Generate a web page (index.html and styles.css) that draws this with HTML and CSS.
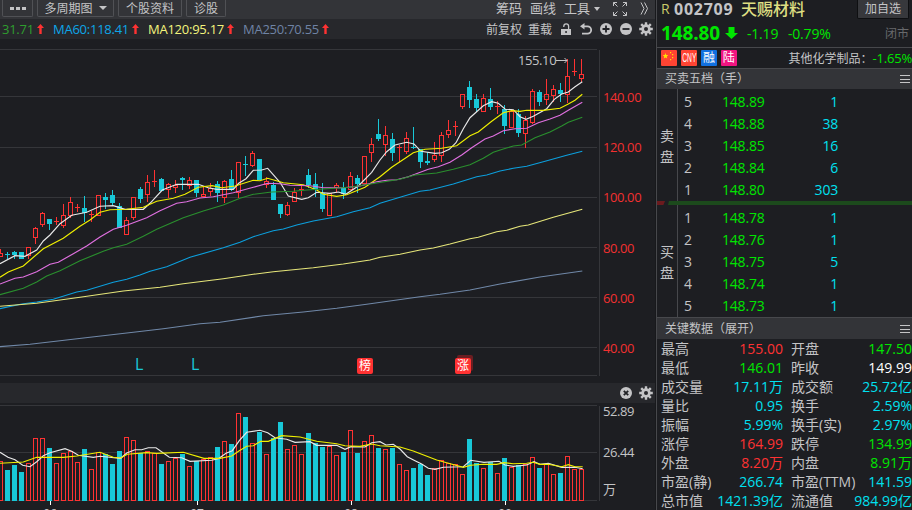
FILE: index.html
```
<!DOCTYPE html>
<html lang="zh-CN">
<head>
  <meta charset="utf-8">
  <title>天赐材料 002709</title>
  <link rel="stylesheet" href="styles.css">
</head>
<body>
  <div class="app">
    <div class="main">
      <div class="toolbar">
        <div class="tabs">
          <button class="tab tab-more"><i></i><i></i><i></i></button>
          <button class="tab tab-period">多周期图<span class="caret"></span></button>
          <button class="tab tab-info">个股资料</button>
          <button class="tab tab-diag">诊股</button>
        </div>
        <div class="tools">
          <span>筹码</span>
          <span>画线</span>
          <span>工具</span>
          <span class="caret small"></span>
          <svg class="expand" width="14" height="14" viewBox="0 0 14 14"><path d="M0.500 4V.5H4M.5.500 4.500 4.500M10 .5h3.500V4M13.500.5l-4 4M.5 10v3.500H4M.5 13.500l4-4M10 13.500h3.500V10M13.500 13.500l-4-4"/></svg>
          <svg class="more" width="9" height="13" viewBox="0 0 9 13"><path d="M1 .5l3 6-3 6M4.500.5l3 6-3 6"/></svg>
        </div>
      </div>

      <div class="ma-bar">
        <div class="ma-list">
          <span class="ma ma30">31.71<svg class="up" width="7" height="10" viewBox="0 0 7 10"><path d="M3.500 0L7 4H4.700v6H2.300V4H0z"/></svg></span>
          <span class="ma ma60">MA60:118.41<svg class="up" width="7" height="10" viewBox="0 0 7 10"><path d="M3.500 0L7 4H4.700v6H2.300V4H0z"/></svg></span>
          <span class="ma ma120">MA120:95.17<svg class="up" width="7" height="10" viewBox="0 0 7 10"><path d="M3.500 0L7 4H4.700v6H2.300V4H0z"/></svg></span>
          <span class="ma ma250">MA250:70.55<svg class="up" width="7" height="10" viewBox="0 0 7 10"><path d="M3.500 0L7 4H4.700v6H2.300V4H0z"/></svg></span>
        </div>
        <div class="ma-tools">
          <span class="restore">前复权</span>
          <span class="reload">重载</span>
          <svg width="12" height="12" viewBox="0 0 12 12"><path d="M1 6h10v6H1z" fill="#c4c4c6"/><path d="M3.800 4V3.200a2.400 2.400 0 0 1 4.800 0V6" fill="none" stroke="#c4c4c6" stroke-width="1.300"/><path d="M5.300 8h1.500v2H5.300z" fill="#27282c"/></svg>
          <svg width="12" height="12" viewBox="0 0 12 12"><path d="M2 3.300h5.500a3.600 3.600 0 0 1 0 7.300H2" fill="none" stroke="#c4c4c6" stroke-width="1.800"/><path d="M0 3.300L4.500 0v6.600z" fill="#c4c4c6"/></svg>
          <svg width="12" height="12" viewBox="0 0 12 12"><circle cx="6" cy="6" r="6" fill="#c4c4c6"/><path d="M2.500 6h7M6 2.500v7" stroke="#202125" stroke-width="1.800"/></svg>
          <svg width="12" height="12" viewBox="0 0 12 12"><circle cx="6" cy="6" r="6" fill="#c4c4c6"/><path d="M2.500 6h7" stroke="#202125" stroke-width="1.800"/></svg>
          <svg class="gear" width="14" height="14" viewBox="-7 -7 14 14"><path d="M0-6.800V6.800M-6.800 0H6.800M-4.800-4.800L4.800 4.800M-4.800 4.800L4.800-4.800" stroke="#c4c4c6" stroke-width="2.400"/><circle r="4.700" fill="#c4c4c6"/><circle r="2" fill="#27282c"/></svg>
        </div>
      </div>

      <div class="chart">
        <svg id="kline" width="600" height="344" viewBox="0 39 600 344"></svg>
        <div class="axis price-axis">
          <span>140.00</span>
          <span>120.00</span>
          <span>100.00</span>
          <span>80.00</span>
          <span>60.00</span>
          <span>40.00</span>
        </div>
        <div class="peak">155.10<svg width="12" height="7" viewBox="0 0 12 7"><path d="M0 3.500h11M8.500 1l2.500 2.500L8.500 6"/></svg></div>
        <span class="flag-l first">L</span>
        <span class="flag-l second">L</span>
        <span class="mark bang">榜</span>
        <span class="mark zhang">涨</span>
      </div>

      <div class="vol-bar">
        <svg width="12" height="12" viewBox="0 0 12 12"><circle cx="6" cy="6" r="6" fill="#c4c4c6"/><path d="M3.800 3.800l4.400 4.400M8.200 3.800L3.800 8.200" stroke="#202125" stroke-width="1.800"/></svg>
        <svg class="gear" width="14" height="14" viewBox="-7 -7 14 14"><path d="M0-6.800V6.800M-6.800 0H6.800M-4.800-4.800L4.800 4.800M-4.800 4.800L4.800-4.800" stroke="#c4c4c6" stroke-width="2.400"/><circle r="4.700" fill="#c4c4c6"/><circle r="2" fill="#27282c"/></svg>
      </div>

      <div class="volume">
        <svg id="vol" width="600" height="107" viewBox="0 403 600 107"></svg>
        <div class="axis vol-axis">
          <span>52.89</span>
          <span>26.44</span>
          <span class="unit">万</span>
        </div>
        <span class="month m6">06</span>
        <span class="month m7">07</span>
        <span class="month m8">08</span>
        <span class="month m9">09</span>
      </div>
    </div>

    <div class="side">
      <div class="quote">
        <div class="name-row">
          <span class="margin">R</span>
          <span class="code">002709</span>
          <span class="name">天赐材料</span>
          <button class="add">加自选</button>
        </div>
        <div class="price-row">
          <span class="price">148.80</span>
          <svg width="13" height="12" viewBox="0 0 13 12"><path d="M3.500 0h6v6H13l-6.500 6L0 6h3.500z" fill="#00e600"/></svg>
          <span class="diff">-1.19</span>
          <span class="pct">-0.79%</span>
          <span class="closed">闭市</span>
        </div>
      </div>
      <div class="tags">
        <span class="tag cn"><svg width="16" height="16" viewBox="0 0 16 16"><path d="M4.500 3l.8 1.900 2 .1-1.500 1.400.4 2.100-1.700-1.100-1.700 1.100.4-2.100L1.700 5l2-.1z"/><path d="M9 2h1.200v1.200H9zM11 4h1.200v1.200H11zM11 7h1.200v1.200H11zM9 9h1.200v1.200H9z"/></svg></span>
        <span class="tag cny"><b>CNY</b></span>
        <span class="tag rong">融</span>
        <span class="tag lu">陆</span>
        <span class="sector">其他化学制品：</span>
        <span class="sector-pct">-1.65%</span>
      </div>

      <div class="head">买卖五档（手）<i class="menu"></i></div>
      <div class="book sell">
        <div class="book-side"><span>卖</span><span>盘</span></div>
        <div class="levels">
          <div class="level"><span>5</span><span>148.89</span><span>1</span></div>
          <div class="level"><span>4</span><span>148.88</span><span>38</span></div>
          <div class="level"><span>3</span><span>148.85</span><span>16</span></div>
          <div class="level"><span>2</span><span>148.84</span><span>6</span></div>
          <div class="level"><span>1</span><span>148.80</span><span>303</span></div>
        </div>
      </div>
      <div class="ratio"><i class="buy-part"></i><i class="sell-part"></i></div>
      <div class="book buy">
        <div class="book-side"><span>买</span><span>盘</span></div>
        <div class="levels">
          <div class="level"><span>1</span><span>148.78</span><span>1</span></div>
          <div class="level"><span>2</span><span>148.76</span><span>1</span></div>
          <div class="level"><span>3</span><span>148.75</span><span>5</span></div>
          <div class="level"><span>4</span><span>148.74</span><span>1</span></div>
          <div class="level"><span>5</span><span>148.73</span><span>1</span></div>
        </div>
      </div>

      <div class="head key-head">关键数据（展开）<i class="menu"></i></div>
      <div class="stats">
        <span>最高</span><b class="red">155.00</b><span>开盘</span><b class="green">147.50</b>
        <span>最低</span><b class="green">146.01</b><span>昨收</span><b class="white">149.99</b>
        <span>成交量</span><b>17.11万</b><span>成交额</span><b>25.72亿</b>
        <span>量比</span><b>0.95</b><span>换手</span><b>2.59%</b>
        <span>振幅</span><b>5.99%</b><span>换手(实)</span><b>2.97%</b>
        <span>涨停</span><b class="red">164.99</b><span>跌停</span><b class="green">134.99</b>
        <span>外盘</span><b class="red">8.20万</b><span>内盘</span><b class="green">8.91万</b>
        <span>市盈(静)</span><b>266.74</b><span>市盈(TTM)</span><b>141.59</b>
        <span>总市值</span><b>1421.39亿</b><span>流通值</span><b>984.99亿</b>
      </div>
    </div>
  </div>
  <script src="chart.js"></script>
</body>
</html>
```
FILE: styles.css
```
* {
  box-sizing: border-box;
}
body {
  margin: 0;
  background: #1d1e22;
  color: #c4c4c6;
  font-family: "Open Sans", "Noto Sans CJK SC", sans-serif;
  font-size: 13px;
  overflow: hidden;
}
svg {
  display: block;
  flex: none;
}
button {
  font-family: inherit;
  color: inherit;
  padding: 0;
}
.app {
  display: flex;
  width: 912px;
  height: 510px;
  overflow: hidden;
  white-space: nowrap;
}
.main {
  width: 656px;
  flex: none;
  display: flex;
  flex-direction: column;
  border-right: 1px solid #18191c;
}

/* top bars */
.toolbar {
  height: 19px;
  background: #333438;
  display: flex;
  justify-content: space-between;
}
.tabs {
  display: flex;
  gap: 4px;
  padding-left: 2px;
}
.tab {
  height: 17px;
  border: 1px solid #505155;
  border-top: 0;
  border-radius: 0 0 2px 2px;
  background: #333438;
  font-size: 12px;
  line-height: 15px;
  display: flex;
  align-items: center;
  justify-content: center;
}
.tab-more {
  width: 31px;
  gap: 2px;
}
.tab-more i {
  width: 4px;
  height: 3px;
  background: #c4c4c6;
}
.tab-period {
  width: 77px;
}
.tab-info {
  width: 64px;
}
.tab-diag {
  width: 40px;
}
.caret {
  border: 4px solid transparent;
  border-top-color: #c4c4c6;
  border-bottom: 0;
  margin-left: 6px;
}
.tools {
  display: flex;
  align-items: center;
  line-height: 17px;
  padding-right: 6px;
  height: 17px;
}
.tools span {
  margin-right: 8px;
}
.tools .caret.small {
  border-width: 3px;
  border-top-width: 4px;
  border-bottom: 0;
  margin: 0 13px 0 -4px;
}
.expand, .more {
  fill: none;
  stroke: #c4c4c6;
}
.more {
  margin-left: 13px;
}
.ma-bar {
  height: 20px;
  background: #27282c;
  display: flex;
  justify-content: space-between;
  line-height: 19px;
}
.ma-list {
  display: flex;
  padding-left: 2px;
  letter-spacing: -0.25px;
}
.ma {
  display: flex;
  align-items: center;
}
.up {
  fill: #ff3232;
  margin-left: 3px;
}
.ma30 {
  width: 51px;
  color: #2f9e2f;
}
.ma60 {
  width: 95px;
  color: #0da6e8;
}
.ma120 {
  width: 95px;
  color: #f4f47c;
}
.ma250 {
  color: #6f83a5;
}
.ma-tools {
  display: flex;
  align-items: center;
  gap: 8px;
  padding-right: 2px;
  font-size: 12px;
}
.ma-tools .restore {
  margin-right: -2px;
}
.gear {
  margin-left: -1px;
}

/* price chart */
.chart {
  position: relative;
  display: flex;
  height: 344px;
}
.axis {
  display: flex;
  flex-direction: column;
  padding-left: 3px;
  letter-spacing: -0.4px;
}
.price-axis {
  padding-top: 33px;
  color: #f23030;
  font-weight: 500;
}
.price-axis span {
  height: 50.200px;
  line-height: 50px;
}
.peak {
  position: absolute;
  left: 518px;
  top: 12px;
  line-height: 18px;
  display: flex;
  align-items: center;
  letter-spacing: -0.4px;
}
.peak svg {
  fill: none;
  stroke: #c4c4c6;
}
.flag-l {
  position: absolute;
  top: 315px;
  font: 16px/20px "Open Sans", sans-serif;
  color: #18c8d8;
}
.first {
  left: 135px;
}
.second {
  left: 191px;
}
.mark {
  position: absolute;
  width: 16px;
  height: 16px;
  border-radius: 2px;
  background: #ff3232;
  color: #fff;
  font-size: 12px;
  line-height: 15px;
  text-align: center;
}
.bang {
  left: 357px;
  top: 319px;
}
.zhang {
  left: 455px;
  top: 319px;
  box-shadow: 2px -3px 0 #6b1e22;
}
.grid {
  stroke: #35363a;
  shape-rendering: crispEdges;
}
.line {
  fill: none;
  stroke-width: 1.150;
}

/* volume */
.vol-bar {
  height: 20px;
  background: #27282c;
  display: flex;
  align-items: center;
  justify-content: flex-end;
  gap: 8px;
  padding-right: 2px;
}
.volume {
  position: relative;
  display: flex;
  height: 107px;
}
.vol-axis span {
  height: 41px;
  line-height: 17px;
}
.vol-axis .unit {
  height: 18px;
  margin-top: -4px;
}
.month {
  position: absolute;
  top: 103px;
  width: 20px;
  margin-left: -10px;
  text-align: center;
  font-size: 12px;
  line-height: 16px;
}
.m6 { left: 50px; }
.m7 { left: 197px; }
.m8 { left: 351px; }
.m9 { left: 505px; }

/* right panel */
.side {
  flex: none;
  width: 256px;
  border-left: 1px solid #47484c;
}
.quote {
  height: 48px;
  border-bottom: 1px solid #47484c;
}
.name-row {
  display: flex;
  height: 19px;
  line-height: 18px;
  padding-left: 4px;
}
.margin {
  width: 13px;
  color: #c9c96a;
  font-size: 14px;
}
.code {
  width: 67px;
  font-size: 16px;
  font-weight: 700;
  letter-spacing: 0.750px;
}
.name {
  width: 116px;
  color: #dede82;
  font-size: 16px;
  font-weight: 500;
}
.add {
  width: 52px;
  height: 19px;
  border: 1px solid #0e0f11;
  border-top: 0;
  border-radius: 0 0 2px 2px;
  background: #37383c;
  font-size: 12px;
  line-height: 16px;
}
.price-row {
  display: flex;
  align-items: center;
  height: 28px;
  padding-left: 4px;
  color: #00e600;
  font-size: 14px;
  letter-spacing: -0.200px;
}
.price {
  width: 64px;
  font-size: 19px;
  font-weight: 700;
  letter-spacing: -0.100px;
}
.diff {
  margin-left: 9px;
  width: 41px;
}
.pct {
  width: 97px;
}
.closed {
  color: #68696c;
  font-size: 12px;
  letter-spacing: 0;
}
.tags {
  display: flex;
  align-items: center;
  height: 20px;
  padding-left: 4px;
  font-size: 12px;
}
.tag {
  width: 16px;
  height: 16px;
  margin-right: 4px;
  line-height: 15px;
  text-align: center;
  color: #fff;
  border-radius: 1px;
}
.cn {
  background: #ff4433;
  fill: #ffe000;
}
.cny {
  background: #ff4433;
  font: 12px/16px "Liberation Sans", sans-serif;
}
.cny b {
  display: block;
  width: 26px;
  font-weight: 400;
  transform: scaleX(0.560);
  transform-origin: 0 0;
  margin-left: 1px;
}
.rong {
  background: #1070e0;
}
.lu {
  background: #f01480;
}
.sector {
  margin-left: 48px;
  width: 84px;
}
.sector-pct {
  color: #00e600;
  font-size: 13px;
  letter-spacing: -0.200px;
}
.head {
  display: flex;
  justify-content: space-between;
  height: 21px;
  border-top: 1px solid #47484c;
  background: #333438;
  padding: 0 2px 0 8px;
  font-size: 12px;
  line-height: 19px;
}
.menu {
  width: 10px;
  height: 8px;
  margin-top: 6px;
  border: solid #c4c4c6;
  border-width: 1px 0;
  background: linear-gradient(#c4c4c6, #c4c4c6) 0 50% / 100% 1px no-repeat;
}
.key-head {
  height: 22px;
  line-height: 21px;
}
.key-head .menu {
  margin-top: 7px;
}
.book {
  display: flex;
}
.book-side {
  width: 21px;
  border-right: 1px solid #47484c;
  display: flex;
  flex-direction: column;
  align-items: center;
  justify-content: center;
  line-height: 21px;
  font-size: 14px;
  padding-top: 1px;
}
.levels {
  flex: 1;
  padding-top: 2px;
}
.level {
  display: grid;
  grid-template-columns: 38px 63px 59px;
  height: 22px;
  line-height: 22px;
  padding-left: 6px;
  font-size: 14px;
  letter-spacing: -0.200px;
}
.level span:nth-child(2) {
  color: #00e600;
}
.level span:nth-child(3) {
  color: #00e0f0;
  text-align: right;
  padding-right: 6px;
}
.ratio {
  display: flex;
  height: 4px;
  gap: 3px;
}
.buy-part {
  width: 8px;
  background: #6b1a1e;
  clip-path: polygon(0 0, 100% 0, 80% 100%, 0 100%);
}
.sell-part {
  flex: 1;
  background: #1c4a1c;
  clip-path: polygon(1px 0, 100% 0, 100% 100%, 0 100%);
}
.stats {
  display: grid;
  grid-template-columns: 50px 72px 69px 60px;
  grid-auto-rows: 19px;
  line-height: 19px;
  padding-left: 4px;
  font-size: 14px;
}
.stats b {
  font-weight: 400;
  color: #00e0f0;
  justify-self: end;
}
.stats span:nth-child(4n + 3) {
  padding-left: 8px;
}
.stats .red {
  color: #ff3232;
}
.stats .green {
  color: #00e600;
}
.stats .white {
  color: #fff;
}
```
FILE: chart.js
```
// r = up (hollow), c = down (filled); then body top, body bottom, high, low
var candles = [
  ['r',253,257,249,257],['c',254,255,252,259],['c',252,255,251,259],['c',252,259,252,259],['r',247,256,247,259],['r',228,238,227,244],
  ['r',213,225,212,227],['c',219,224,219,230],['r',221,222,217,225],['r',215,226,204,228],['r',202,216,197,218],['r',207,208,204,212],
  ['c',208,213,196,222],['r',214,215,211,222],['r',195,216,195,216],['c',197,200,193,209],['c',195,203,190,206],['c',206,228,203,228],
  ['r',220,235,217,235],['r',197,218,197,220],['c',189,199,187,203],['r',182,195,175,202],['r',181,182,170,187],['c',179,191,178,191],
  ['r',184,190,183,198],['r',185,188,180,193],['c',178,180,177,190],['r',180,186,177,189],['c',180,193,180,197],['r',194,197,187,197],
  ['r',188,192,183,196],['c',184,193,181,202],['r',181,198,180,203],['c',179,189,170,191],['r',162,193,162,198],['c',164,165,156,176],
  ['r',153,166,151,167],['c',159,180,159,180],['r',181,185,177,188],['c',185,200,182,200],['c',204,214,204,218],['r',205,215,202,216],
  ['r',192,202,188,202],['r',189,190,185,196],['c',175,185,169,188],['c',184,190,173,197],['c',193,209,183,212],['r',193,216,193,216],
  ['r',185,188,183,193],['c',188,194,182,199],['r',176,190,172,190],['c',178,184,175,193],['r',156,184,156,184],['r',144,153,138,162],
  ['c',134,139,119,141],['r',135,145,126,156],['c',139,153,133,161],['r',147,148,145,162],['r',138,152,132,154],['c',147,148,127,149],
  ['c',149,162,149,168],['c',161,163,152,165],['r',155,160,142,162],['r',135,156,132,162],['r',130,135,120,138],['r',126,127,121,136],
  ['r',94,107,94,109],['c',87,100,81,108],['c',99,108,94,112],['r',98,112,94,112],['c',99,107,88,110],['r',106,107,101,114],
  ['c',109,126,105,134],['r',111,128,109,128],['c',114,133,109,137],['r',120,134,116,148],['r',91,123,89,124],['c',92,102,90,106],
  ['r',94,100,79,105],['r',89,96,85,102],['c',90,94,83,102],['r',76,95,59,103],['r',71,72,59,76],['r',74,79,59,82]
];

// top of every volume bar
var volumes = [
  461,470,465,472,463,438,438,448,463,453,451,462,449,469,452,454,464,451,437,440,453,451,453,464,461,458,454,466,461,459,457,447,
  441,444,413,417,443,432,454,438,422,449,445,454,433,443,447,446,455,452,430,453,441,435,448,449,448,464,470,468,464,475,468,460,
  463,464,474,439,463,468,462,473,458,467,465,464,457,468,464,474,473,456,469,469
];

var lines = [
  ['#e8e8e8', '0,263.700 15,255.700 25,256.300 36.700,250 43.300,241 50,235 60,223.700 71.700,215.300 86.700,212.300 100,206.300 113.300,205.700 125,209.300 143.300,209.300 150,203.300 162.300,190 176.700,184.300 198.300,184.300 208.300,187.700 216.700,189.300 233.300,189.300 238.700,183.300 246,178.700 253.300,170.300 261.700,170 267.700,168.300 280,182.300 288.300,196 301.700,199.300 308.300,197.700 316.700,192.300 330,193.300 338.300,192 345.700,194.300 358.300,186 371.700,172.300 380,160 386.700,151.700 395,145 406.700,142.300 414,144 421,151.300 435,153.300 441.700,152.700 449.300,149.300 456,142.700 463.300,128.700 470,117.700 483.300,105.700 491.700,101.700 498.300,103.300 505.300,109.300 513.300,109.700 520,116.700 526,119.300 533.300,116.300 546.700,108.700 554.300,99.300 561.700,94 568.300,92 575,86.700 582.300,81.700'],
  ['#f0f000', '0,277.300 8.300,272 23.300,266 43.300,248.700 63.300,238.300 80,226.300 90,220 100,212.300 110,209.700 126.700,209.300 143.300,207.300 156.700,201.300 173.300,198.300 185,194.300 198.300,187.300 212,185.700 221.700,187.700 235,186 253.300,180.300 260,180.700 267.700,178.300 283.300,182.700 303.300,184.700 316.700,190 323.300,194.300 336.700,196.300 346.700,194.700 365,187.300 380,176.700 391.700,167.300 406.700,157.300 413.300,152.700 425,149.300 441.700,148.300 456.700,145.700 470,135.700 478.300,132 491.700,121.300 503.300,112.700 511.700,110.700 520,111.300 526.700,110.300 543.300,110.300 560,108.300 568.300,104 575,100.300 582.300,94.300'],
  ['#e070e0', '0,284 15,278.300 23.300,277 36.700,271.700 50,264.300 58.300,262.300 73.300,253.700 86.700,246 100,237 113.300,229.300 126.700,225.300 146.700,217.700 160,210.700 176.700,203.300 186.700,201.700 200,198 213.300,196.700 233.300,192.700 253.300,187.300 267.700,183.300 280,183.700 290,185.300 310,185.700 323.300,187.700 343.300,187.700 360,186 376.700,181.700 386.700,180.300 396.700,179.700 408.300,176.700 428.300,169.300 438.300,166.700 450,162.300 461.700,155 471.700,147.700 485,139 493.300,136 503.300,130.700 515,128.700 526.700,128.300 538.300,122.700 550,119 560,115.300 568.300,110.300 582.300,102.300'],
  ['#2a8f2e', '0,294.700 23.300,288.300 36.700,282 46.700,276 60,270.700 80,260.700 103.300,251.300 113.300,247.700 126.700,244.300 143.300,236.300 156.700,229.300 183.300,217.700 203.300,211 223.300,205 240,198.300 253.300,194.300 271.700,192 293.300,191.300 306.700,190 326.700,188.700 350,187.300 376.700,183 400,179.300 415,175 436.700,173 453.300,169.300 470,164.700 483.300,158.300 493.300,152.300 503.300,149 513.300,146 521.700,145 535,137.700 550,132 561.700,126 568.300,122.300 582.300,117.300'],
  ['#0c9fdd', '0,308.700 21.700,304 36.700,302 53.300,299.300 76.700,292 86.700,290.300 113.300,282.300 126.700,279.300 140,275 150,271.300 166.700,266.700 190,257.300 223.300,247.700 240,242.300 253.300,236.700 273.300,230.700 283.300,229 296.700,225 313.300,221 336.700,216.700 353.300,211.700 370,207.700 380,203.300 400,197.300 420,191.300 430,190 453.300,184 476.700,176.700 486.700,175 500,171 513.300,168.300 526.700,166.300 543.300,161.700 566.700,155.300 582.300,151.300'],
  ['#e6e67a', '0,306.300 36.700,303.300 80,297.300 123.300,291 160,287.300 183.300,283.700 223.300,278.700 253.300,274.300 273.300,271.700 313.300,267.700 343.300,264 370,260 380,257.300 400,254.300 420,250 433.300,248 450,244 470,238.700 478.300,237.300 496.700,231.700 506.700,230.300 520,226.300 528.300,225 553.300,217.300 582.300,209.300'],
  ['#7088a8', '0,346.700 30,344.300 90,337.300 133.300,332.300 163.300,328.700 200,323.700 220,322.300 263.300,315.700 303.300,312 336.700,308.300 366.700,304.300 420,296.700 440,294.300 470,290 500,284 540,277 582.300,271']
];

var volLines = [
  ['#e8e8e8', '0,452.300 8,457.300 15,459.700 22.700,465.300 30,466.700 36.700,461.700 43.300,455.700 50,452.700 65,448.700 71.700,451.300 78.300,455.300 93.300,457.300 100,456.300 120.700,458.300 126.700,453 135,449.700 141.700,449.700 148.300,447.700 156,447.700 169.300,457.300 181.700,457.700 190,461.300 211.700,460.300 218.300,458.700 226,453.300 232.300,450.700 239.300,440.700 246.700,432.300 260,430.300 267.700,432.700 275,437.700 286.700,439.300 295,442.300 310,441.700 316.700,445.300 336.700,445.300 345,449.300 351,446.700 365,447 371.700,442.700 380,441.700 386,445 393.300,444.300 400,449 407.300,456.700 415,460.700 421.700,464 428.300,468.300 435,469.300 443.300,467.300 463.300,466.700 470.700,460.300 484,462.300 499,461.300 505,465 513.300,466.300 526.700,465 534,461.700 540,464.300 548.300,463.300 561.700,467.300 575,467.300 582.700,468.700'],
  ['#f0f000', '0,463.300 23.300,462 36.700,457.300 63.300,457.300 76.700,456 100,452.300 113.300,457.300 120.700,458 127.300,454.300 146.700,452.700 156.700,453.300 183.300,452.300 204,458.300 220,458.300 231.700,456 239.300,450.700 246.700,446.300 253.300,445.700 260.700,441.300 268.300,441.300 281.700,435.700 300,437 316.700,441.300 336.700,443.700 345,445.700 360,446.300 371.700,444 380,445.700 400,447 413.300,451 421.700,454.300 436.700,460 446.700,462.700 463.300,467.300 470.700,465.300 483.300,464.300 496.700,464.300 504,462.700 513.300,463.700 526.700,463.300 533.300,462.300 540,464.300 548.300,464.300 561.700,466.700 568.300,464.700 575,466.700 582.700,466.700']
];

var RED = '#ff3232', CYAN = '#18c8d8';

function hline(y) {
  return '<path class="grid" d="M0 ' + (y + 0.5) + 'H597"/>';
}

function rect(x, y, w, h, color) {
  return '<rect x="' + x + '" y="' + y + '" width="' + w + '" height="' + h + '" fill="' + color + '"/>';
}

function box(x, y, w, h) {
  return '<rect x="' + (x + 0.5) + '" y="' + (y + 0.5) + '" width="' + (w - 1) + '" height="' + (h - 1) + '" fill="none" stroke="' + RED + '"/>';
}

function polylines(list) {
  return list.map(function(l) {
    return '<polyline class="line" stroke="' + l[0] + '" points="' + l[1] + '"/>';
  }).join('');
}

function drawKline() {
  var out = [49, 96, 147, 197, 247, 297, 347, 375].map(hline).join('');
  out += '<path class="grid" d="M599.5 50V376"/>';
  candles.forEach(function(c, i) {
    var x = i * 7, color = c[0] === 'r' ? RED : CYAN;
    if (c[0] === 'c' || c[2] - c[1] < 2) {
      out += rect(x, c[3], 1, c[4] - c[3], color);
      out += rect(x - 2, c[1], 5, c[2] - c[1], color);
    } else {
      out += rect(x, c[3], 1, c[1] - c[3], color) + rect(x, c[2], 1, c[4] - c[2], color);
      out += box(x - 2, c[1], 5, c[2] - c[1]);
    }
  });
  document.getElementById('kline').innerHTML = out + polylines(lines);
}

function drawVolume() {
  var out = [405, 452, 500].map(hline).join('');
  out += '<path class="grid" d="M599.5 406V501"/>';
  volumes.forEach(function(top, i) {
    var x = i * 7 - 2;
    out += candles[i][0] === 'c' ? rect(x, top, 5, 501 - top, CYAN) : box(x, top, 5, 501 - top);
  });
  [50, 197, 351, 505].forEach(function(x) {
    out += rect(x, 501, 1, 4, '#fff');
  });
  document.getElementById('vol').innerHTML = out + polylines(volLines);
}

drawKline();
drawVolume();
```
